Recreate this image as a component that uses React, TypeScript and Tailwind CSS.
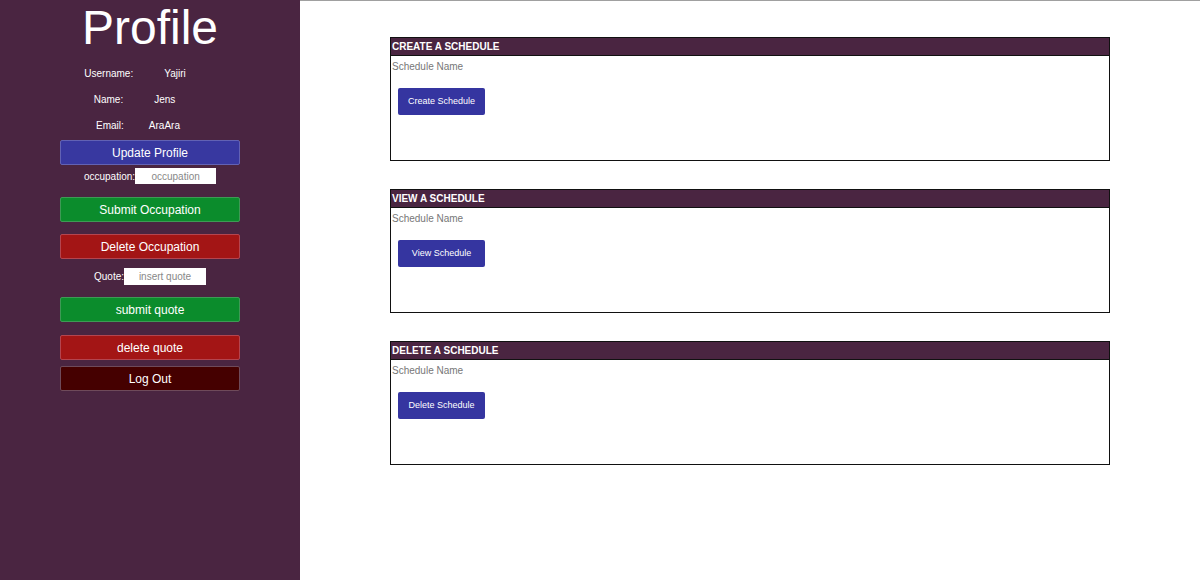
import React from "react";

const font = { fontFamily: '"Liberation Sans", Arial, sans-serif' };

function InfoRow({ label, value, gap, pr }: { label: string; value: string; gap: string; pr: string }) {
  return (
    <div className={`flex h-[26px] items-center justify-center text-[10px] text-white ${pr}`}>
      <span className={gap}>{label}</span>
      <span>{value}</span>
    </div>
  );
}

function SideButton({ text, cls, mt }: { text: string; cls: string; mt: string }) {
  return (
    <button
      className={`flex h-[25px] w-[180px] items-center justify-center rounded-[2px] border text-[12px] text-white ${cls} ${mt}`}
    >
      {text}
    </button>
  );
}

function Card({ title, button }: { title: string; button: string }) {
  return (
    <div className="flex h-[124px] flex-col border border-[#111]">
      <div className="flex h-[18px] items-center border-b border-[#111] bg-[#4a2541] px-[1px] text-[10px] font-bold leading-none text-white">
        {title}
      </div>
      <input
        placeholder="Schedule Name"
        className="h-[20px] px-[1px] text-[10px] text-[#333] outline-none placeholder:text-[#777]"
        style={font}
      />
      <button className="ml-[7px] mt-[12px] flex h-[27px] w-[87px] items-center justify-center rounded-[2px] bg-[#3535a0] text-[9px] text-white">
        {button}
      </button>
    </div>
  );
}

export default function App() {
  return (
    <div className="flex h-[580px] w-[1200px] overflow-hidden bg-white" style={font}>
      <aside className="flex h-full w-[300px] shrink-0 flex-col items-center bg-[#4a2541]">
        <h1 className="text-[48px] leading-[55px] text-white">Profile</h1>
        <div className="mt-[5px] flex flex-col">
          <InfoRow label="Username:" value="Yajiri" gap="mr-[31px]" pr="pr-[30px]" />
          <InfoRow label="Name:" value="Jens" gap="mr-[31px]" pr="pr-[31px]" />
          <InfoRow label="Email:" value="AraAra" gap="mr-[25px]" pr="pr-[24px]" />
        </div>
        <SideButton text="Update Profile" cls="bg-[#3838a0] border-[#6262b4]" mt="mt-[2px]" />
        <div className="mt-[3px] flex items-center text-[10px] text-white">
          <span>occupation:</span>
          <input
            placeholder="occupation"
            className="h-[16px] w-[81px] bg-white text-center text-[10px] text-[#333] outline-none placeholder:text-[#888]"
            style={font}
          />
        </div>
        <SideButton text="Submit Occupation" cls="bg-[#0b8c2c] border-[#3e9a55]" mt="mt-[13px]" />
        <SideButton text="Delete Occupation" cls="bg-[#a31515] border-[#b4454f]" mt="mt-[12px]" />
        <div className="mt-[9px] flex items-center text-[10px] text-white">
          <span>Quote:</span>
          <input
            placeholder="insert quote"
            className="h-[17px] w-[82px] bg-white text-center text-[10px] text-[#333] outline-none placeholder:text-[#888]"
            style={font}
          />
        </div>
        <SideButton text="submit quote" cls="bg-[#0b8c2c] border-[#3e9a55]" mt="mt-[12px]" />
        <SideButton text="delete quote" cls="bg-[#a31515] border-[#b4454f]" mt="mt-[13px]" />
        <SideButton text="Log Out" cls="bg-[#450000] border-[#6e4a5a]" mt="mt-[6px]" />
      </aside>
      <main className="h-full flex-1 border-t border-[#a0a0a0]">
        <div className="mx-auto mt-[36px] flex w-[720px] flex-col gap-[28px]">
          <Card title="CREATE A SCHEDULE" button="Create Schedule" />
          <Card title="VIEW A SCHEDULE" button="View Schedule" />
          <Card title="DELETE A SCHEDULE" button="Delete Schedule" />
        </div>
      </main>
    </div>
  );
}
